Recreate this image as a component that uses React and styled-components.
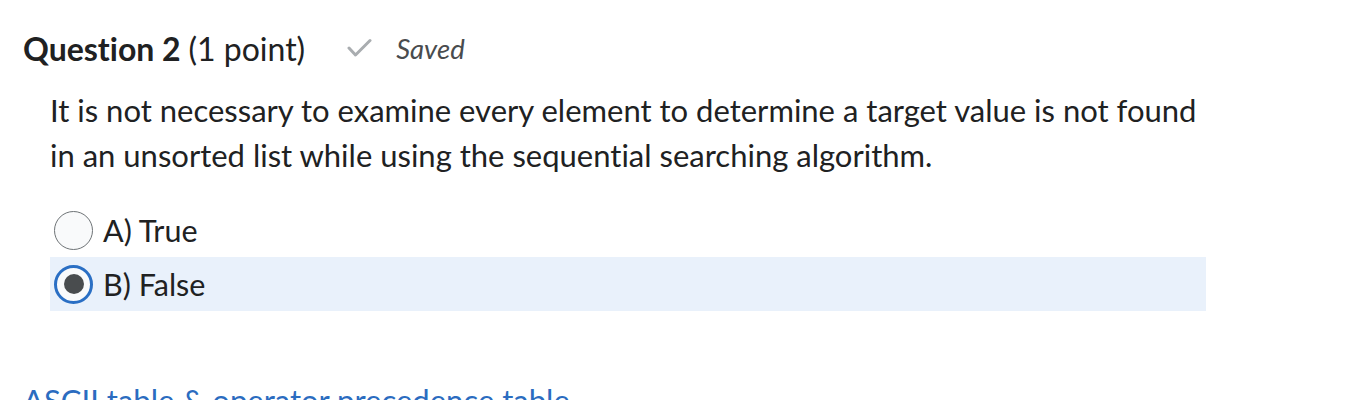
import React from 'react';
import styled, { createGlobalStyle } from 'styled-components';

const GlobalStyle = createGlobalStyle`
  body {
    margin: 0;
    background: #fff;
    font-family: Lato, "Open Sans", sans-serif;
    font-variant-ligatures: none;
    color: #202122;
  }
`;

const Page = styled.div`
  padding: 26px 0 0 23px;
  height: 400px;
  box-sizing: border-box;
  overflow: hidden;
`;

const Header = styled.div`
  display: flex;
  align-items: center;
  height: 44px;
`;

const Title = styled.h2`
  margin: 0;
  font-size: 32px;
  font-weight: 700;
  color: #202122;
`;

const Points = styled.span`
  font-weight: 400;
`;

const Status = styled.span`
  display: flex;
  align-items: center;
  margin-left: 42px;
  font-size: 27.5px;
  font-style: italic;
  color: #494c4e;
  gap: 23px;
`;

const Body = styled.div`
  padding-left: 27px;
  width: 1156px;
`;

const Prompt = styled.p`
  margin: 18px 0 0;
  font-size: 31px;
  line-height: 45px;
  color: #202122;
`;

const Options = styled.div`
  margin-top: 25px;
  display: flex;
  flex-direction: column;
`;

const Option = styled.label`
  display: flex;
  align-items: center;
  height: 54px;
  padding-left: 4px;
  gap: 10px;
  font-size: 30.5px;
  background: ${p => (p.selected ? '#e9f1fb' : 'transparent')};
`;

const Radio = styled.span`
  width: 39px;
  height: 39px;
  flex: none;
  border-radius: 50%;
  box-sizing: border-box;
  border: ${p => (p.selected ? '3px solid #2a6fc4' : '1px solid #6e7376')};
  background: #f9fafb;
  display: flex;
  align-items: center;
  justify-content: center;

  &::after {
    content: '';
    display: ${p => (p.selected ? 'block' : 'none')};
    width: 20px;
    height: 20px;
    border-radius: 50%;
    background: #494c4e;
  }
`;

const Link = styled.a`
  display: block;
  margin-top: 70px;
  font-size: 31px;
  color: #2b6cc0;
  text-decoration: none;
`;

const Check = () => (
  <svg width="26" height="20" viewBox="0 0 26 20" fill="none">
    <path d="M2 10 L8.5 17 L23 2.5" stroke="#a9adb0" strokeWidth="3" strokeLinecap="round" strokeLinejoin="round" />
  </svg>
);

export default function App() {
  return (
    <Page>
      <GlobalStyle />
      <Header>
        <Title>
          Question 2 <Points>(1 point)</Points>
        </Title>
        <Status>
          <Check />
          Saved
        </Status>
      </Header>
      <Body>
        <Prompt>
          It is not necessary to examine every element to determine a target value is not found
          <br />
          in an unsorted list while using the sequential searching algorithm.
        </Prompt>
        <Options>
          <Option>
            <Radio />
            A) True
          </Option>
          <Option selected>
            <Radio selected />
            B) False
          </Option>
        </Options>
      </Body>
      <Link href="#">ASCII table &amp; operator precedence table</Link>
    </Page>
  );
}
